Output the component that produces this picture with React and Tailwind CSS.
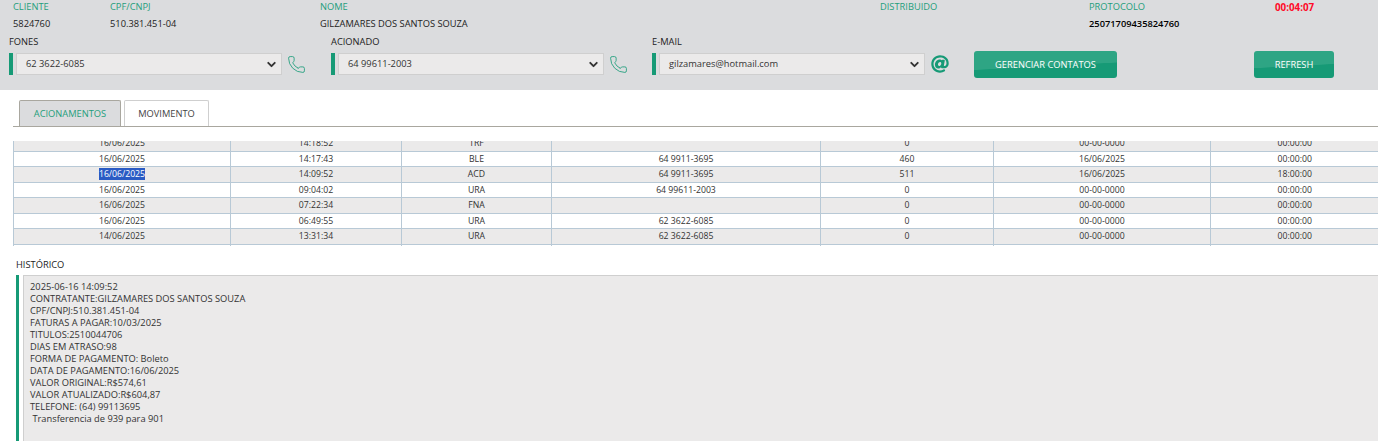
import { Phone, ChevronDown } from 'lucide-react'
import { FaAt } from 'react-icons/fa'

const ROWS = [
  ['16/06/2025', '14:18:52', 'TRF', '', '0', '00-00-0000', '00:00:00'],
  ['16/06/2025', '14:17:43', 'BLE', '64 9911-3695', '460', '16/06/2025', '00:00:00'],
  ['16/06/2025', '14:09:52', 'ACD', '64 9911-3695', '511', '16/06/2025', '18:00:00'],
  ['16/06/2025', '09:04:02', 'URA', '64 99611-2003', '0', '00-00-0000', '00:00:00'],
  ['16/06/2025', '07:22:34', 'FNA', '', '0', '00-00-0000', '00:00:00'],
  ['16/06/2025', '06:49:55', 'URA', '62 3622-6085', '0', '00-00-0000', '00:00:00'],
  ['14/06/2025', '13:31:34', 'URA', '62 3622-6085', '0', '00-00-0000', '00:00:00'],
]

const HISTORY = [
  '2025-06-16 14:09:52',
  'CONTRATANTE:GILZAMARES DOS SANTOS SOUZA',
  'CPF/CNPJ:510.381.451-04',
  'FATURAS A PAGAR:10/03/2025',
  'TITULOS:2510044706',
  'DIAS EM ATRASO:98',
  'FORMA DE PAGAMENTO: Boleto',
  'DATA DE PAGAMENTO:16/06/2025',
  'VALOR ORIGINAL:R$574,61',
  'VALOR ATUALIZADO:R$604,87',
  'TELEFONE: (64) 99113695',
  '\u00a0Transferencia de 939 para 901',
]

const Field = ({ label, width, children }) => (
  <div className={width}>
    <div className="text-[#1f9e7c] leading-[12px]">{label}</div>
    <div className="mt-[5px] h-[12px] leading-[12px] text-[#222]">{children}</div>
  </div>
)

const ContactSelect = ({ label, value, width, icon }) => (
  <div className="shrink-0">
    <div className="text-[#222] leading-[12px]">{label}</div>
    <div className="mt-[5px] flex items-center">
      <div className="w-[4px] h-[22px] bg-[#169a76]" />
      <div className={`ml-[3px] h-[22px] ${width} flex items-center justify-between bg-[#ebeaea] border border-[#cfcfcf] pl-[9px] pr-[3px] text-[#333]`}>
        <span>{value}</span>
        <ChevronDown size={13} strokeWidth={3.5} className="text-[#333]" />
      </div>
      {icon}
    </div>
  </div>
)

const CallIcon = () => (
  <Phone size={19} strokeWidth={1.1} className="ml-[5px] text-[#1f9e7c]" />
)

const Button = ({ width, children }) => (
  <button className={`${width} h-[27px] rounded-[3px] text-white font-medium bg-[linear-gradient(177deg,#2ea584_0%,#2ea584_54%,#169a76_56%,#169a76_100%)]`}>
    {children}
  </button>
)

export default function App() {
  return (
    <div className="h-[441px] overflow-hidden bg-white text-[9.3px] font-['Open_Sans',sans-serif]">
      <div className="h-[90px] bg-[#dbdcde]">
        <div className="flex pl-[13px] pt-px">
          <Field label="CLIENTE" width="w-[97px]">5824760</Field>
          <Field label="CPF/CNPJ" width="w-[210px]">510.381.451-04</Field>
          <Field label="NOME" width="w-[560px]">GILZAMARES DOS SANTOS SOUZA</Field>
          <Field label="DISTRIBUIDO" width="w-[209px]"></Field>
          <Field label="PROTOCOLO" width="w-[186px]">
            <span className="font-semibold text-black">25071709435824760</span>
          </Field>
          <div className="pt-px text-[9.8px] leading-[12px] font-bold text-[#ff0a28]">00:04:07</div>
        </div>
        <div className="flex items-start pl-[9px] mt-[6px]">
          <div className="w-[322px]">
            <ContactSelect label="FONES" value="62 3622-6085" width="w-[266px]" icon={<CallIcon />} />
          </div>
          <div className="w-[321px]">
            <ContactSelect label="ACIONADO" value="64 99611-2003" width="w-[266px]" icon={<CallIcon />} />
          </div>
          <div className="w-[322px]">
            <ContactSelect
              label="E-MAIL"
              value="gilzamares@hotmail.com"
              width="w-[266px]"
              icon={<FaAt size={18} className="ml-[6px] text-[#169a76]" />}
            />
          </div>
          <div className="flex mt-[15px]">
            <Button width="w-[143px]">GERENCIAR CONTATOS</Button>
            <Button width="w-[80px] ml-[137px]">REFRESH</Button>
          </div>
        </div>
      </div>

      <div className="ml-[13px] mt-[10px] h-[27px] flex items-end pl-[6px] border-b border-[#a9a79f]">
        <div className="w-[102px] h-[26px] flex items-center justify-center rounded-t-[2px] border border-b-0 border-[#a9a79f] bg-[#dbdcde] text-[#1f9e7c]">
          ACIONAMENTOS
        </div>
        <div className="ml-[3px] w-[85px] h-[26px] flex items-center justify-center rounded-t-[2px] border border-b-0 border-[#cfcfcf] bg-white text-[#444]">
          MOVIMENTO
        </div>
      </div>

      <div className="ml-[13px] mt-[14px] h-[105px] overflow-hidden">
        <table className="-mt-[6px] w-[1365px] table-fixed border-collapse text-center text-[8.7px] text-[#333]">
          <colgroup>
            <col className="w-[217px]" />
            <col className="w-[171px]" />
            <col className="w-[150px]" />
            <col className="w-[269px]" />
            <col className="w-[173px]" />
            <col className="w-[217px]" />
            <col className="w-[168px]" />
          </colgroup>
          <tbody>
            {ROWS.map((row, i) => (
              <tr key={i} className={`h-[15.5px] ${i % 2 ? 'bg-white' : 'bg-[#ebeaea]'}`}>
                {row.map((cell, j) => (
                  <td key={j} className={`p-0 leading-[12px] border border-[#b8c9d6] ${j === 6 ? 'border-r-0' : ''}`}>
                    {i === 2 && j === 0 ? <span className="bg-[#2a5bc4] text-white">{cell}</span> : cell}
                  </td>
                ))}
              </tr>
            ))}
            <tr className="h-[6px]">
              {ROWS[0].map((_, j) => (
                <td key={j} className={`p-0 border-x border-[#b8c9d6] ${j === 6 ? 'border-r-0' : ''}`} />
              ))}
            </tr>
          </tbody>
        </table>
      </div>

      <div className="ml-[16px] mt-[13px] leading-[12px] text-[#222]">HISTÓRICO</div>
      <div className="ml-[16px] mt-[4px] flex h-[170px]">
        <div className="w-[3px] bg-[#169a76]" />
        <div className="ml-[4px] flex-1 bg-[#ebeaea] border-t border-l border-[#cfcfcf] pl-[6px] pt-[5px] leading-[12px] text-[#333]">
          {HISTORY.map((line, i) => <div key={i}>{line}</div>)}
        </div>
      </div>
    </div>
  )
}
